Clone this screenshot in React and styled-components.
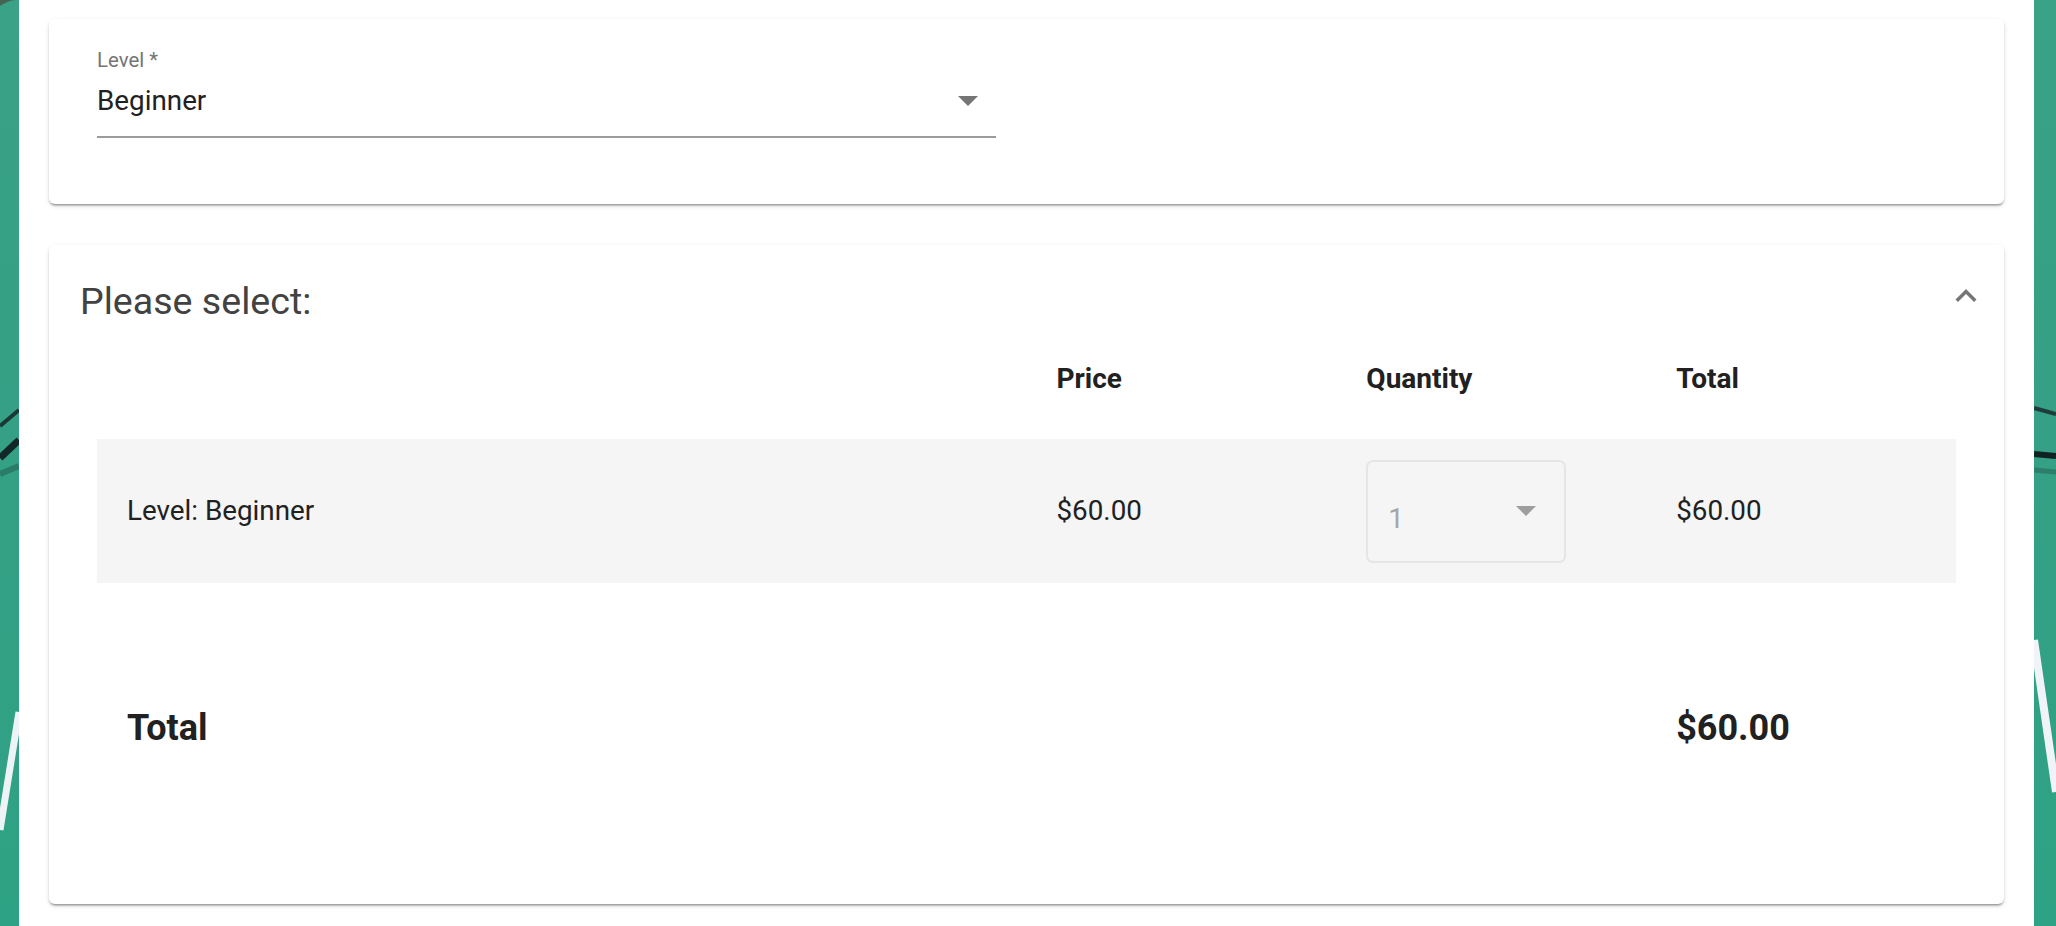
import React from 'react';
import styled, { createGlobalStyle } from 'styled-components';

const GlobalStyle = createGlobalStyle`
  html, body {
    margin: 0;
    padding: 0;
  }
  body {
    height: 926px;
    overflow: hidden;
    background: linear-gradient(180deg, #3aa286 0%, #35a085 45%, #2ea284 100%);
    font-family: Roboto, "Noto Sans", Arial, sans-serif;
    color: #212121;
  }
`;

const Backdrop = styled.svg`
  position: fixed;
  top: 0;
  left: 0;
  width: 2056px;
  height: 926px;
  z-index: 0;
  pointer-events: none;
`;

const Page = styled.main`
  position: relative;
  z-index: 1;
  box-sizing: border-box;
  width: 2015px;
  height: 926px;
  margin-left: 19px;
  padding: 19px 30px 0;
  background: #fff;
  display: flex;
  flex-direction: column;
  gap: 41px;
`;

const Card = styled.section`
  background: #fff;
  border-radius: 6px;
  box-shadow: 0 3px 2px -2px rgba(0, 0, 0, 0.25), 0 2px 2px 0 rgba(0, 0, 0, 0.14),
    0 2px 5px 0 rgba(0, 0, 0, 0.12);
`;

const FieldCard = styled(Card)`
  padding: 29px 48px 66px;
`;

const FieldLabel = styled.label`
  display: block;
  font-size: 20.4px;
  line-height: 24px;
  color: #757575;
`;

const SelectField = styled.div`
  box-sizing: content-box;
  width: 899px;
  height: 39px;
  margin-top: 9px;
  padding-bottom: 16px;
  border-bottom: 2px solid #9b9b9b;
  display: flex;
  align-items: center;
  justify-content: space-between;
`;

const SelectValue = styled.span`
  font-size: 27.8px;
  line-height: 39px;
  color: #212121;
`;

const Caret = styled.svg`
  width: 20px;
  height: 10px;
  margin-right: ${(p) => p.$right}px;
  fill: ${(p) => p.$color};
  flex-shrink: 0;
`;

const CartCard = styled(Card)`
  padding-bottom: 154px;
`;

const CartHeader = styled.header`
  display: flex;
  justify-content: space-between;
  padding: 33px 17px 0 31px;
`;

const CartTitle = styled.h2`
  margin: 0;
  font-size: 37.6px;
  font-weight: 400;
  line-height: 46px;
  color: #424242;
`;

const ToggleIcon = styled.svg`
  width: 42px;
  height: 42px;
  margin-top: -3px;
  fill: #757575;
`;

const Table = styled.div`
  margin: 0 48px;
`;

const Row = styled.div`
  display: grid;
  grid-template-columns: 3fr 1fr 1fr 1fr;
  align-items: center;
  background: ${(p) => (p.$shaded ? '#f5f5f5' : 'transparent')};
  height: ${(p) => (p.$height ? `${p.$height}px` : 'auto')};
  padding: ${(p) => p.$pad || '0'};
`;

const Cell = styled.div`
  padding-left: 30px;
  font-size: ${(p) => p.$size || 27.8}px;
  font-weight: ${(p) => (p.$bold ? 700 : 400)};
  line-height: ${(p) => p.$lh || 40}px;
  color: #212121;
  white-space: nowrap;
`;

const QtySelect = styled.div`
  box-sizing: border-box;
  width: 200px;
  height: 103px;
  border: 2px solid #e5e5e5;
  border-radius: 7px;
  padding: 0 0 0 20px;
  display: flex;
  align-items: center;
  justify-content: space-between;
`;

const QtyValue = styled.span`
  font-size: 28px;
  line-height: 40px;
  color: #a6a6a6;
  margin-top: 15px;
`;

const Decorations = () => (
  <Backdrop viewBox="0 0 2056 926">
    <path d="M0 6 C6 2 12 0 16 0 L0 0Z" fill="#4a4a3e" opacity="0.7" />
    <path d="M0 426 L19 410" stroke="#17262a" strokeWidth="4" opacity="0.85" />
    <path d="M0 458 L19 440" stroke="#0e1a1e" strokeWidth="7" opacity="0.9" />
    <path d="M0 474 L19 466" stroke="#1f5a4c" strokeWidth="6" opacity="0.5" />
    <path d="M0 830 L19 712" stroke="#eef3f7" strokeWidth="7" />
    <path d="M2034 408 L2056 414" stroke="#1b2b2e" strokeWidth="4" opacity="0.85" />
    <path d="M2034 454 L2056 456" stroke="#0e1519" strokeWidth="6" opacity="0.9" />
    <path d="M2034 470 L2056 472" stroke="#245e50" strokeWidth="5" opacity="0.5" />
    <path d="M2034 640 L2056 792" stroke="#f0f4f8" strokeWidth="8" />
  </Backdrop>
);

const items = [{ id: 'level', name: 'Level: Beginner', price: '$60.00', qty: 1, total: '$60.00' }];

export default function App() {
  return (
    <>
      <GlobalStyle />
      <Decorations />
      <Page>
        <FieldCard>
          <FieldLabel>Level *</FieldLabel>
          <SelectField>
            <SelectValue>Beginner</SelectValue>
            <Caret viewBox="0 0 20 10" $right={18} $color="#757575">
              <path d="M0 0h20L10 10z" />
            </Caret>
          </SelectField>
        </FieldCard>

        <CartCard>
          <CartHeader>
            <CartTitle>Please select:</CartTitle>
            <ToggleIcon viewBox="0 0 24 24">
              <path d="M12 8l-6 6 1.41 1.41L12 10.83l4.59 4.58L18 14z" />
            </ToggleIcon>
          </CartHeader>

          <Table>
            <Row $pad="34px 0 39px">
              <Cell />
              <Cell $bold $size={28} $lh={42}>Price</Cell>
              <Cell $bold $size={28} $lh={42}>Quantity</Cell>
              <Cell $bold $size={28} $lh={42}>Total</Cell>
            </Row>

            {items.map((item) => (
              <Row key={item.id} $shaded $height={144}>
                <Cell>{item.name}</Cell>
                <Cell>{item.price}</Cell>
                <Cell>
                  <QtySelect>
                    <QtyValue>{item.qty}</QtyValue>
                    <Caret viewBox="0 0 20 10" $right={28} $color="#9e9e9e">
                      <path d="M0 0h20L10 10z" />
                    </Caret>
                  </QtySelect>
                </Cell>
                <Cell>{item.total}</Cell>
              </Row>
            ))}

            <Row $pad="123px 0 0">
              <Cell $bold $size={36} $lh={44}>Total</Cell>
              <Cell />
              <Cell />
              <Cell $bold $size={36} $lh={44}>$60.00</Cell>
            </Row>
          </Table>
        </CartCard>
      </Page>
    </>
  );
}
